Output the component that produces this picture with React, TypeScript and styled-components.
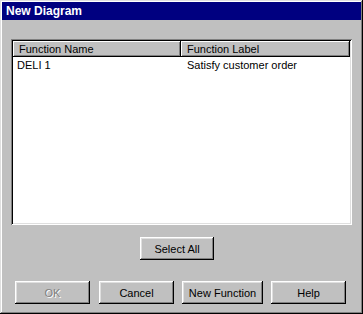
import React from 'react';
import styled, { createGlobalStyle } from 'styled-components';

const GlobalStyle = createGlobalStyle`
  html, body {
    margin: 0;
    padding: 0;
    background: #c0c0c0;
  }
  * {
    box-sizing: border-box;
  }
`;

const Window = styled.div`
  width: 363px;
  height: 314px;
  padding: 2px;
  background: #c0c0c0;
  font-family: 'Liberation Sans', Arial, sans-serif;
  font-size: 11px;
  color: #000;
  box-shadow: inset -1px -1px #000, inset 1px 1px #dfdfdf,
    inset -2px -2px #808080, inset 2px 2px #fff;
  display: flex;
  flex-direction: column;
`;

const TitleBar = styled.div`
  height: 18px;
  background: #000080;
  color: #fff;
  font-weight: bold;
  font-size: 12px;
  display: flex;
  align-items: center;
  padding-left: 4px;
`;

const Body = styled.div`
  display: flex;
  flex-direction: column;
  padding: 19px 9px 0 9px;
`;

const ListView = styled.div`
  height: 186px;
  padding: 2px;
  background: #fff;
  box-shadow: inset 1px 1px #808080, inset -1px -1px #fff,
    inset 2px 2px #000, inset -2px -2px #dfdfdf;
  display: flex;
  flex-direction: column;
`;

const HeaderRow = styled.div`
  display: flex;
  height: 16px;
  width: 337px;
`;

const HeaderCell = styled.div<{ $width: number }>`
  width: ${({ $width }) => $width}px;
  flex: none;
  background: #c0c0c0;
  padding-left: 6px;
  padding-bottom: 1px;
  display: flex;
  align-items: center;
  white-space: nowrap;
  box-shadow: inset -1px -1px #000, inset 1px 1px #fff,
    inset -2px -2px #808080;
`;

const Row = styled.div`
  display: flex;
  height: 14px;
  margin-top: 1px;
  align-items: center;
`;

const Cell = styled.div<{ $width: number; $pad: number }>`
  width: ${({ $width }) => $width}px;
  padding-left: ${({ $pad }) => $pad}px;
  flex: none;
  white-space: nowrap;
`;

const CenterRow = styled.div`
  display: flex;
  padding-left: 129px;
  margin-top: 12px;
`;

const ButtonRow = styled.div`
  display: flex;
  gap: 8px;
  padding-left: 4px;
  margin-top: 21px;
`;

const Button = styled.button<{ $width: number; $extraGap?: boolean }>`
  width: ${({ $width }) => $width}px;
  height: 23px;
  flex: none;
  padding: 0;
  margin-right: ${({ $extraGap }) => ($extraGap ? 1 : 0)}px;
  border: none;
  background: #c0c0c0;
  font-family: 'Liberation Sans', Arial, sans-serif;
  font-size: 11px;
  color: #000;
  box-shadow: inset -1px -1px #000, inset 1px 1px #fff,
    inset -2px -2px #808080, inset 2px 2px #dfdfdf;

  &:disabled {
    color: #808080;
    text-shadow: 1px 1px #fff;
  }
`;

const App = () => {
    return (
        <>
            <GlobalStyle />
            <Window>
                <TitleBar>New Diagram</TitleBar>
                <Body>
                    <ListView>
                        <HeaderRow>
                            <HeaderCell $width={168}>Function Name</HeaderCell>
                            <HeaderCell $width={169}>Function Label</HeaderCell>
                        </HeaderRow>
                        <Row>
                            <Cell $width={168} $pad={4}>DELI 1</Cell>
                            <Cell $width={169} $pad={6}>Satisfy customer order</Cell>
                        </Row>
                    </ListView>
                    <CenterRow>
                        <Button $width={74}>Select All</Button>
                    </CenterRow>
                    <ButtonRow>
                        <Button $width={75} $extraGap disabled>
                            OK
                        </Button>
                        <Button $width={75}>Cancel</Button>
                        <Button $width={81}>New Function</Button>
                        <Button $width={75}>Help</Button>
                    </ButtonRow>
                </Body>
            </Window>
        </>
    );
};

export default App;
